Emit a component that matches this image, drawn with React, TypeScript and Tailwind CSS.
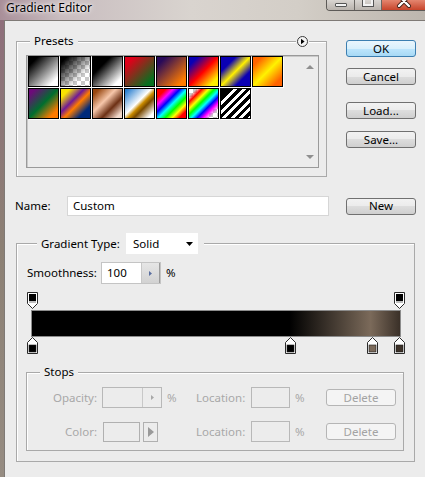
import React from "react";

type Preset = { bg: string; checker?: boolean };

const PRESETS: Preset[] = [
  { bg: "bg-[image:linear-gradient(135deg,#000_15%,#fff_85%)]" },
  { bg: "bg-[image:linear-gradient(135deg,#000_10%,transparent_70%)]", checker: true },
  { bg: "bg-[image:linear-gradient(135deg,#000_30%,#fff_85%)]" },
  { bg: "bg-[image:linear-gradient(135deg,#e0001a_15%,#07701f_85%)]" },
  { bg: "bg-[image:linear-gradient(135deg,#290a59_15%,#ff7c00_85%)]" },
  { bg: "bg-[image:linear-gradient(135deg,#0a00b4_15%,#ff0000_50%,#fff000_85%)]" },
  { bg: "bg-[image:linear-gradient(135deg,#0a00b4_25%,#fff000_50%,#0a00b4_75%)]" },
  { bg: "bg-[image:linear-gradient(135deg,#ff6300_15%,#fff200_50%,#ff6300_85%)]" },
  { bg: "bg-[image:linear-gradient(135deg,#6d0a7a_10%,#006e2e_50%,#ff7b00_85%)]" },
  { bg: "bg-[image:linear-gradient(135deg,#f9e400_15%,#6f1a96_40%,#ff7b00_55%,#002a7a_80%)]" },
  { bg: "bg-[image:linear-gradient(135deg,#97460f_10%,#f6c7aa_40%,#6d3014_65%,#f2d9cb_90%)]" },
  { bg: "bg-[image:linear-gradient(135deg,#2a7fcf_5%,#fff_45%,#c98b00_55%,#7a4a00_65%,#fff_90%)]" },
  {
    bg: "bg-[image:linear-gradient(135deg,#ff0000_15%,#ff00ff_28%,#0000ff_40%,#00ffff_52%,#00ff00_64%,#ffff00_76%,#ff0000_88%)]",
  },
  {
    bg: "bg-[image:linear-gradient(135deg,transparent_12%,#ff0000_22%,#ffff00_34%,#00ff00_44%,#00ffff_54%,#0000ff_64%,#ff00ff_74%,transparent_86%)]",
    checker: true,
  },
  {
    bg: "bg-[image:linear-gradient(135deg,#000_20%,transparent_20%),repeating-linear-gradient(135deg,#000_0_3px,#fff_3px_6px)]",
  },
];

const COLOR_STOPS = [
  { left: -4, color: "#000000" },
  { left: 254, color: "#000000" },
  { left: 336, color: "#7b6a5a" },
  { left: 363, color: "#3e332a" },
];

function Swatch({ bg, checker }: Preset) {
  return (
    <div className="relative mr-px mb-px h-[31px] w-[31px] border border-black shadow-[1px_1px_0_#fff]">
      {checker && (
        <div className="absolute inset-0 bg-[image:repeating-conic-gradient(#c9c9c9_0_25%,#fff_0_50%)] bg-[length:8px_8px]" />
      )}
      <div className={`absolute inset-0 ${bg}`} />
    </div>
  );
}

function OpacityStop() {
  return (
    <svg width="11" height="17" viewBox="0 0 11 17">
      <path d="M0.5 0.5H10.5V11.5L5.5 16.5L0.5 11.5Z" fill="#fff" stroke="#2b2b2b" />
      <rect x="2" y="2" width="7" height="7" fill="#000" />
      <rect x="2" y="9" width="7" height="2" fill="#bdbdbd" />
    </svg>
  );
}

function ColorStop({ color }: { color: string }) {
  return (
    <svg width="11" height="17" viewBox="0 0 11 17">
      <path d="M5.5 0.5L10.5 5.5V16.5H0.5V5.5Z" fill="#fff" stroke="#2b2b2b" />
      <rect x="2" y="8" width="7" height="7" fill={color} stroke="#1a1a1a" strokeWidth="0.6" />
    </svg>
  );
}

function Button({ label, primary, disabled }: { label: string; primary?: boolean; disabled?: boolean }) {
  let cls =
    "border-[#707070] bg-[image:linear-gradient(#f2f2f2_0%,#ebebeb_50%,#dddddd_50%,#cfcfcf_100%)] text-black";
  if (primary) {
    cls = "border-[#3c7fb1] bg-[image:linear-gradient(#eaf6fd_0%,#d9f0fc_50%,#bee6fd_50%,#a7d9f5_100%)] text-black";
  }
  if (disabled) {
    cls = "border-[#b5b5b5] bg-[#f4f4f4] text-[#a3a3a3]";
  }
  return (
    <div
      className={`flex h-[17px] w-[70px] shrink-0 items-center justify-center rounded-[3px] border leading-none ${cls}`}
    >
      {label}
    </div>
  );
}

function GroupLabel({ children, className }: { children: React.ReactNode; className: string }) {
  return <div className={`absolute bg-[#ececec] px-[4px] leading-[14px] ${className}`}>{children}</div>;
}

function TitleBar() {
  return (
    <div className="flex h-[20px] items-start justify-between bg-[image:linear-gradient(90deg,#a98f99_0%,#c8bcbf_14%,#d9d4cf_45%,#d3cec7_70%,#bdb6ae_100%)]">
      <div className="pl-[6px] pt-[1px] text-[12px] leading-[14px] text-black [text-shadow:0_0_6px_#fff,0_0_3px_#fff]">
        Gradient Editor
      </div>
      <div className="flex h-[11px] overflow-hidden rounded-bl-[4px] border-b border-l border-[#5d5a57]">
        <div className="flex h-full w-[28px] justify-center border-r border-[#6a6662] bg-[image:linear-gradient(#d9d5d1,#b9b3ad)]">
          <div className="mt-[3px] h-[4px] w-[12px] rounded-[1px] border border-[#555] bg-[#f2f2f2]" />
        </div>
        <div className="flex h-full w-[27px] justify-center border-r border-[#6a6662] bg-[image:linear-gradient(#d9d5d1,#b9b3ad)]">
          <div className="-mt-[3px] h-[9px] w-[10px] border-2 border-[#f2f2f2] outline outline-1 outline-[#555]" />
        </div>
        <div className="flex h-full w-[43px] justify-center bg-[image:linear-gradient(#e4866f,#c7452b)]">
          <svg width="16" height="11" viewBox="0 0 16 11">
            <path d="M3 -4L13 6M13 -4L3 6" stroke="#3a1a12" strokeWidth="4" strokeLinecap="round" />
            <path d="M3 -4L13 6M13 -4L3 6" stroke="#fff" strokeWidth="2.4" strokeLinecap="round" />
          </svg>
        </div>
      </div>
    </div>
  );
}

function PresetsBox() {
  return (
    <div className="relative mt-[1px] h-[136px] w-[311px] border border-[#a9a9a9] shadow-[inset_1px_1px_0_#fff]">
      <GroupLabel className="-top-[8px] left-[13px]">Presets</GroupLabel>
      <div className="absolute -top-[6px] right-[17px] bg-[#ececec] px-[1px]">
        <svg width="11" height="11" viewBox="0 0 11 11">
          <circle cx="5.5" cy="5.5" r="5" fill="#f4f4f4" stroke="#3a3a3a" />
          <path d="M4 2.8L7.6 5.5L4 8.2Z" fill="#000" />
        </svg>
      </div>
      <div className="ml-[9px] mt-[13px] flex h-[113px] w-[293px] border border-[#9a9a9a] bg-[#ececec] shadow-[inset_1px_1px_0_#c9c9c9]">
        <div className="flex w-[274px] flex-wrap content-start pl-[1px]">
          {PRESETS.map((p, i) => (
            <Swatch key={i} {...p} />
          ))}
        </div>
        <div className="flex flex-1 flex-col items-center justify-between pb-[7px] pt-[8px]">
          <svg width="8" height="5" viewBox="0 0 8 5">
            <path d="M0 5L4 1L8 5Z" fill="#8f8f8f" />
          </svg>
          <svg width="8" height="5" viewBox="0 0 8 5">
            <path d="M0 0L4 4L8 0Z" fill="#8f8f8f" />
          </svg>
        </div>
      </div>
    </div>
  );
}

function GradientBox() {
  return (
    <div className="relative mt-[27px] h-[219px] w-[399px] border border-[#a9a9a9] shadow-[inset_1px_1px_0_#fff]">
      <div className="absolute -top-[11px] left-[20px] flex h-[21px] items-center bg-[#ececec] pl-[4px] pr-[6px]">
        <span className="w-[85px]">Gradient Type:</span>
        <div className="flex h-[21px] w-[72px] items-center justify-between bg-white pl-[7px] pr-[5px]">
          <span>Solid</span>
          <svg width="7" height="4" viewBox="0 0 7 4">
            <path d="M0 0H7L3.5 4Z" fill="#000" />
          </svg>
        </div>
      </div>

      <div className="ml-[10px] mt-[18px] flex h-[22px] items-center">
        <span className="w-[74px]">Smoothness:</span>
        <div className="flex h-[22px] w-[60px] border border-[#c4c4c4] bg-white">
          <span className="flex flex-1 items-center pl-[5px]">100</span>
          <div className="flex w-[19px] items-center justify-center border-l border-[#c8c8c8] border-r border-r-[#9c9c9c] bg-[image:linear-gradient(#e6e6e6,#d2d2d2)]">
            <svg width="3" height="5" viewBox="0 0 3 5">
              <path d="M0 0L3 2.5L0 5Z" fill="#5a6fa0" />
            </svg>
          </div>
        </div>
        <span className="ml-[5px]">%</span>
      </div>

      <div className="relative ml-[14px] mt-[8px] h-[62px] w-[370px]">
        <div className="absolute left-[-4px] top-0 flex">
          <OpacityStop />
        </div>
        <div className="absolute left-[363px] top-0 flex">
          <OpacityStop />
        </div>
        <div className="absolute left-0 top-[18px] h-[27px] w-[370px] border border-[#8c8c8c] bg-[image:linear-gradient(90deg,#000_70%,#7b6a5a_92%,#3a3028_100%)]" />
        {COLOR_STOPS.map((s, i) => (
          <div key={i} className="absolute top-[45px] flex" style={{ left: s.left }}>
            <ColorStop color={s.color} />
          </div>
        ))}
      </div>

      <div className="relative ml-[9px] mt-[18px] h-[79px] w-[378px] border border-[#a9a9a9] text-[#a8a8a8] shadow-[inset_1px_1px_0_#fff]">
        <GroupLabel className="-top-[8px] left-[13px] text-black">Stops</GroupLabel>
        <div className="mt-[14px] flex h-[21px] items-center">
          <span className="w-[70px] shrink-0 text-right">Opacity:</span>
          <div className="ml-[5px] flex h-[21px] w-[60px] shrink-0 border border-[#b8b8b8]">
            <span className="flex-1" />
            <div className="flex w-[19px] items-center justify-center border-l border-[#c8c8c8]">
              <svg width="3" height="5" viewBox="0 0 3 5">
                <path d="M0 0L3 2.5L0 5Z" fill="#a8a8a8" />
              </svg>
            </div>
          </div>
          <span className="ml-[5px] w-[29px] shrink-0">%</span>
          <span className="w-[55px] shrink-0">Location:</span>
          <div className="h-[21px] w-[39px] shrink-0 border border-[#b8b8b8]" />
          <span className="ml-[5px] w-[31px] shrink-0">%</span>
          <Button label="Delete" disabled />
        </div>
        <div className="mt-[13px] flex h-[21px] items-center">
          <span className="w-[70px] shrink-0 text-right">Color:</span>
          <div className="ml-[6px] h-[20px] w-[37px] shrink-0 border border-[#b0b0b0]" />
          <div className="ml-[3px] flex h-[20px] w-[15px] shrink-0 items-center justify-center border border-[#b0b0b0]">
            <svg width="6" height="10" viewBox="0 0 6 10">
              <path d="M0 0L6 5L0 10Z" fill="#9a9a9a" />
            </svg>
          </div>
          <span className="ml-[38px] w-[55px] shrink-0">Location:</span>
          <div className="h-[21px] w-[39px] shrink-0 border border-[#b8b8b8]" />
          <span className="ml-[5px] w-[31px] shrink-0">%</span>
          <Button label="Delete" disabled />
        </div>
      </div>
    </div>
  );
}

export default function App() {
  return (
    <div className="h-[477px] w-[425px] overflow-hidden font-['Noto_Sans','Open_Sans',sans-serif] text-[11.5px] text-black">
      <TitleBar />
      <div className="flex h-[457px]">
        <div className="w-[4px] bg-[image:linear-gradient(#8e6f7b,#8c8074_50%,#968c82)]" />
        <div className="flex flex-1 flex-col border-l border-t border-[#7f7a76] bg-[#ececec] pl-[11px]">
          <div className="mt-[19px] flex items-start">
            <PresetsBox />
            <div className="ml-[19px] flex flex-col">
              <Button label="OK" primary />
              <div className="mt-[11px]">
                <Button label="Cancel" />
              </div>
              <div className="mt-[17px]">
                <Button label="Load..." />
              </div>
              <div className="mt-[12px]">
                <Button label="Save..." />
              </div>
            </div>
          </div>

          <div className="mt-[19px] flex h-[20px] items-center">
            <span className="-ml-px w-[52px]">Name:</span>
            <div className="flex h-[20px] w-[262px] items-center border border-[#d6d6d6] bg-white pl-[5px]">Custom</div>
            <div className="ml-[17px]">
              <Button label="New" />
            </div>
          </div>

          <GradientBox />
        </div>
      </div>
    </div>
  );
}
